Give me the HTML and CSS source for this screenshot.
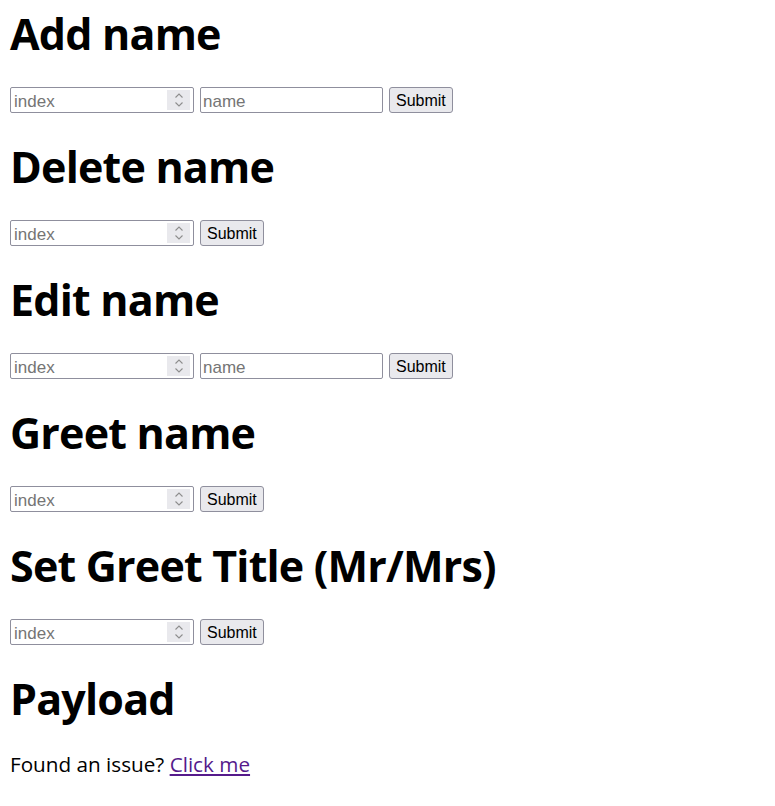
FILE: index.html
```html
<!DOCTYPE html>
<html>
<head>
<meta charset="utf-8">
<link rel="stylesheet" href="styles.css">
</head>
<body>
<div class="page">
  <h1 class="title">Add name</h1>
  <form class="row">
    <label class="num"><input class="field" type="text" placeholder="index"><span class="spin"><svg width="12" height="18" viewBox="0 0 12 18"><path d="M2.5 6.5 L6 3 L9.5 6.5 M2.5 11.5 L6 15 L9.5 11.5" fill="none" stroke="#8d8d8d" stroke-width="1.1"/></svg></span></label>
    <input class="text" type="text" placeholder="name">
    <button class="btn" type="button">Submit</button>
  </form>

  <h1 class="title">Delete name</h1>
  <form class="row">
    <label class="num"><input class="field" type="text" placeholder="index"><span class="spin"><svg width="12" height="18" viewBox="0 0 12 18"><path d="M2.5 6.5 L6 3 L9.5 6.5 M2.5 11.5 L6 15 L9.5 11.5" fill="none" stroke="#8d8d8d" stroke-width="1.1"/></svg></span></label>
    <button class="btn" type="button">Submit</button>
  </form>

  <h1 class="title">Edit name</h1>
  <form class="row">
    <label class="num"><input class="field" type="text" placeholder="index"><span class="spin"><svg width="12" height="18" viewBox="0 0 12 18"><path d="M2.5 6.5 L6 3 L9.5 6.5 M2.5 11.5 L6 15 L9.5 11.5" fill="none" stroke="#8d8d8d" stroke-width="1.1"/></svg></span></label>
    <input class="text" type="text" placeholder="name">
    <button class="btn" type="button">Submit</button>
  </form>

  <h1 class="title">Greet name</h1>
  <form class="row">
    <label class="num"><input class="field" type="text" placeholder="index"><span class="spin"><svg width="12" height="18" viewBox="0 0 12 18"><path d="M2.5 6.5 L6 3 L9.5 6.5 M2.5 11.5 L6 15 L9.5 11.5" fill="none" stroke="#8d8d8d" stroke-width="1.1"/></svg></span></label>
    <button class="btn" type="button">Submit</button>
  </form>

  <h1 class="title">Set Greet Title (Mr/Mrs)</h1>
  <form class="row">
    <label class="num"><input class="field" type="text" placeholder="index"><span class="spin"><svg width="12" height="18" viewBox="0 0 12 18"><path d="M2.5 6.5 L6 3 L9.5 6.5 M2.5 11.5 L6 15 L9.5 11.5" fill="none" stroke="#8d8d8d" stroke-width="1.1"/></svg></span></label>
    <button class="btn" type="button">Submit</button>
  </form>

  <h1 class="title">Payload</h1>
  <p class="note">Found an issue? <a class="link" href="#">Click me</a></p>
</div>
</body>
</html>
```
FILE: styles.css
```css
html, body {
  margin: 0;
  padding: 0;
  background: #ffffff;
}
.page {
  padding: 1px 10px 0 10px;
  font-family: "Open Sans", "Noto Sans", sans-serif;
  color: #000;
}
.title {
  margin: 0;
  font-size: 43px;
  line-height: 65px;
  font-weight: 700;
  letter-spacing: -0.8px;
}
.row {
  display: flex;
  align-items: center;
  gap: 6px;
  margin: 21px 0;
  height: 26px;
}
.num {
  display: flex;
  align-items: center;
  width: 184px;
  height: 26px;
  box-sizing: border-box;
  border: 1px solid #8f8f9d;
  border-radius: 2px;
  padding: 2px 3px 2px 2px;
}
.field {
  flex: 1;
  min-width: 0;
  border: none;
  outline: none;
  padding: 3px 1px 0 1px;
  font-family: "Liberation Sans", Arial, sans-serif;
  font-size: 17px;
  background: transparent;
}
.spin {
  display: flex;
  align-items: center;
  justify-content: center;
  width: 23px;
  height: 20px;
  background: #e9e9ed;
}
.text {
  width: 183px;
  height: 26px;
  box-sizing: border-box;
  border: 1px solid #8f8f9d;
  border-radius: 2px;
  padding: 3px 2px 0 2px;
  font-family: "Liberation Sans", Arial, sans-serif;
  font-size: 17px;
  outline: none;
}
.field::placeholder, .text::placeholder {
  color: #757575;
}
.btn {
  height: 26px;
  box-sizing: border-box;
  border: 1px solid #8f8f9d;
  border-radius: 3px;
  background: #e9e9ed;
  padding: 1px 6px 0 6px;
  font-family: "Liberation Sans", Arial, sans-serif;
  font-size: 16px;
  color: #000;
}
.note {
  margin: 19px 0 0 0;
  font-size: 20.7px;
  line-height: 28px;
}
.link {
  color: #551a8b;
}
```
